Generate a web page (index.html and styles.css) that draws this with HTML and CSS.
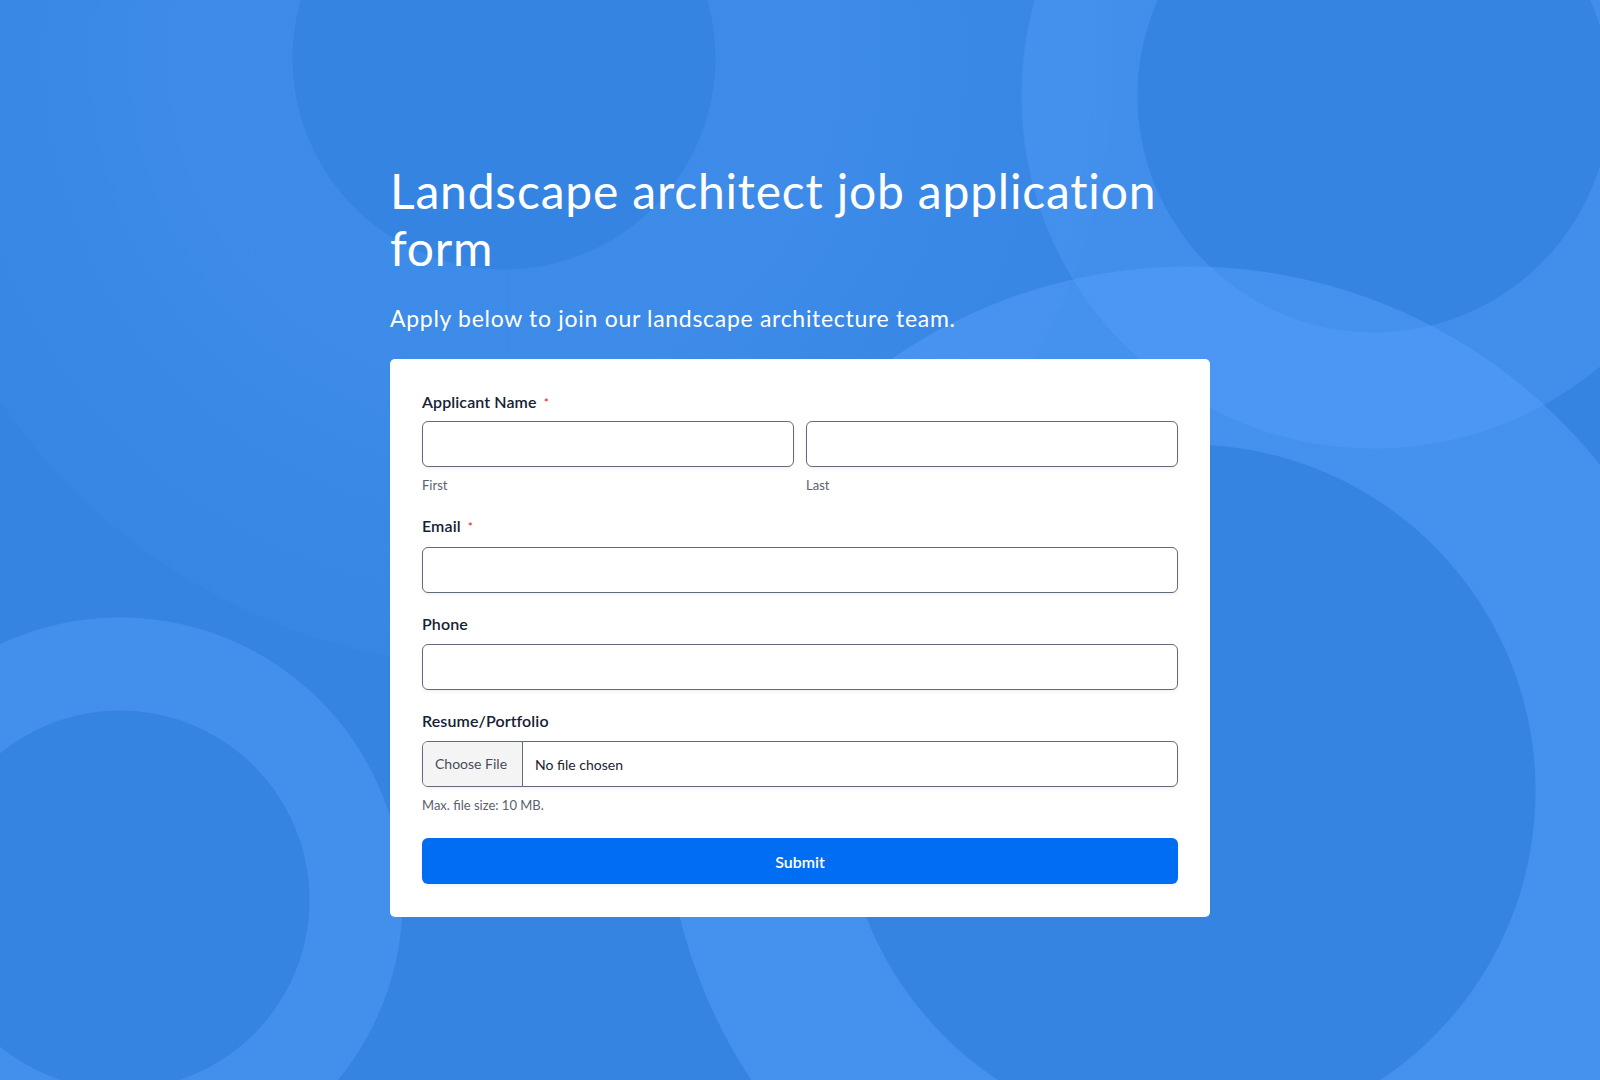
FILE: index.html
```html
<!DOCTYPE html>
<html lang="en">
<head>
<meta charset="utf-8">
<title>Landscape architect job application form</title>
<link rel="stylesheet" href="styles.css">
</head>
<body>
<main class="page">
  <header class="intro">
    <h1 class="title">Landscape architect job application form</h1>
    <p class="subtitle">Apply below to join our landscape architecture team.</p>
  </header>
  <form class="card">
    <div class="field">
      <div class="label label-name">Applicant Name <span class="req">*</span></div>
      <div class="name-row">
        <div class="name-col">
          <input class="input" type="text" aria-label="First">
          <div class="sublabel">First</div>
        </div>
        <div class="name-col">
          <input class="input" type="text" aria-label="Last">
          <div class="sublabel">Last</div>
        </div>
      </div>
    </div>
    <div class="field">
      <div class="label">Email <span class="req">*</span></div>
      <input class="input" type="email" aria-label="Email">
    </div>
    <div class="field">
      <div class="label">Phone</div>
      <input class="input" type="tel" aria-label="Phone">
    </div>
    <div class="field">
      <div class="label">Resume/Portfolio</div>
      <label class="file">
        <span class="file-btn">Choose File</span>
        <span class="file-name">No file chosen</span>
      </label>
      <div class="hint">Max. file size: 10 MB.</div>
    </div>
    <button class="submit" type="button">Submit</button>
  </form>
</main>
</body>
</html>
```
FILE: styles.css
```css
html, body {
  margin: 0;
  padding: 0;
}
body {
  min-height: 1080px;
  font-family: Lato, "Noto Sans", sans-serif;
  background-color: #3584e2;
  background-image:
    radial-gradient(circle at 1374px 96px, transparent 0 236px, rgba(92, 164, 255, 0.30) 237px 352px, transparent 353px),
    radial-gradient(circle at 1189px 791px, transparent 0 346px, rgba(92, 164, 255, 0.40) 347px 524px, transparent 525px),
    radial-gradient(circle at 120px 900px, transparent 0 189px, rgba(92, 164, 255, 0.36) 190px 282px, transparent 283px),
    radial-gradient(circle at 504px 58px, transparent 0 211px, rgba(92, 164, 255, 0.22) 212px 330px, rgba(92, 164, 255, 0.14) 450px, rgba(92, 164, 255, 0.08) 609px, transparent 610px);
  background-repeat: no-repeat;
}
.page {
  width: 820px;
  margin: 0 auto;
  padding-top: 163px;
  padding-bottom: 40px;
}
.intro {
  color: #ffffff;
}
.title {
  margin: 0;
  font-size: 48px;
  line-height: 56.6px;
  font-weight: 400;
  letter-spacing: 0.8px;
}
.subtitle {
  margin: 27px 0 0;
  font-size: 23px;
  line-height: 30.8px;
  font-weight: 400;
  letter-spacing: 0.7px;
}
.card {
  margin-top: 25px;
  background: #ffffff;
  border-radius: 5px;
  padding: 31px 32px 33px;
  display: flex;
  flex-direction: column;
  gap: 19px;
}
.field {
  display: flex;
  flex-direction: column;
}
.label {
  font-size: 16px;
  line-height: 24px;
  font-weight: 600;
  color: #162133;
  margin-bottom: 8px;
  letter-spacing: 0.1px;
}
.label-name {
  margin-bottom: 6px;
}
.req {
  color: #d5392c;
  font-size: 12px;
  margin-left: 3px;
  vertical-align: 1px;
}
.name-row {
  display: grid;
  grid-template-columns: 1fr 1fr;
  gap: 12px;
}
.name-col {
  display: flex;
  flex-direction: column;
}
.input {
  box-sizing: border-box;
  height: 46px;
  width: 100%;
  margin: 0;
  border: 1px solid #626a7b;
  border-radius: 6px;
  background: #ffffff;
  box-shadow: 0 2px 3px rgba(20, 30, 60, 0.06);
  font-family: inherit;
  font-size: 14px;
  padding: 0 12px;
}
.sublabel {
  margin-top: 8px;
  font-size: 13px;
  line-height: 20px;
  color: #5b616d;
}
.file {
  box-sizing: border-box;
  height: 46px;
  display: flex;
  align-items: stretch;
  border: 1px solid #626a7b;
  border-radius: 6px;
  overflow: hidden;
  background: #ffffff;
  box-shadow: 0 2px 3px rgba(20, 30, 60, 0.06);
}
.file-btn {
  display: flex;
  align-items: center;
  padding: 0 12px 1px 12px;
  width: 75px;
  background: #f4f4f5;
  border-right: 1px solid #626a7b;
  font-size: 14px;
  color: #474d59;
}
.file-name {
  display: flex;
  align-items: center;
  padding-left: 12px;
  padding-top: 1px;
  font-size: 14px;
  color: #1c2230;
}
.hint {
  margin-top: 9px;
  font-size: 13px;
  line-height: 18px;
  color: #5b616d;
}
.submit {
  margin-top: 5.5px;
  height: 46px;
  border: none;
  border-radius: 6px;
  background: #006df2;
  color: #ffffff;
  font-family: inherit;
  font-size: 16px;
  font-weight: 600;
  box-shadow: 0 2px 3px rgba(20, 30, 60, 0.06);
  cursor: pointer;
}
```
